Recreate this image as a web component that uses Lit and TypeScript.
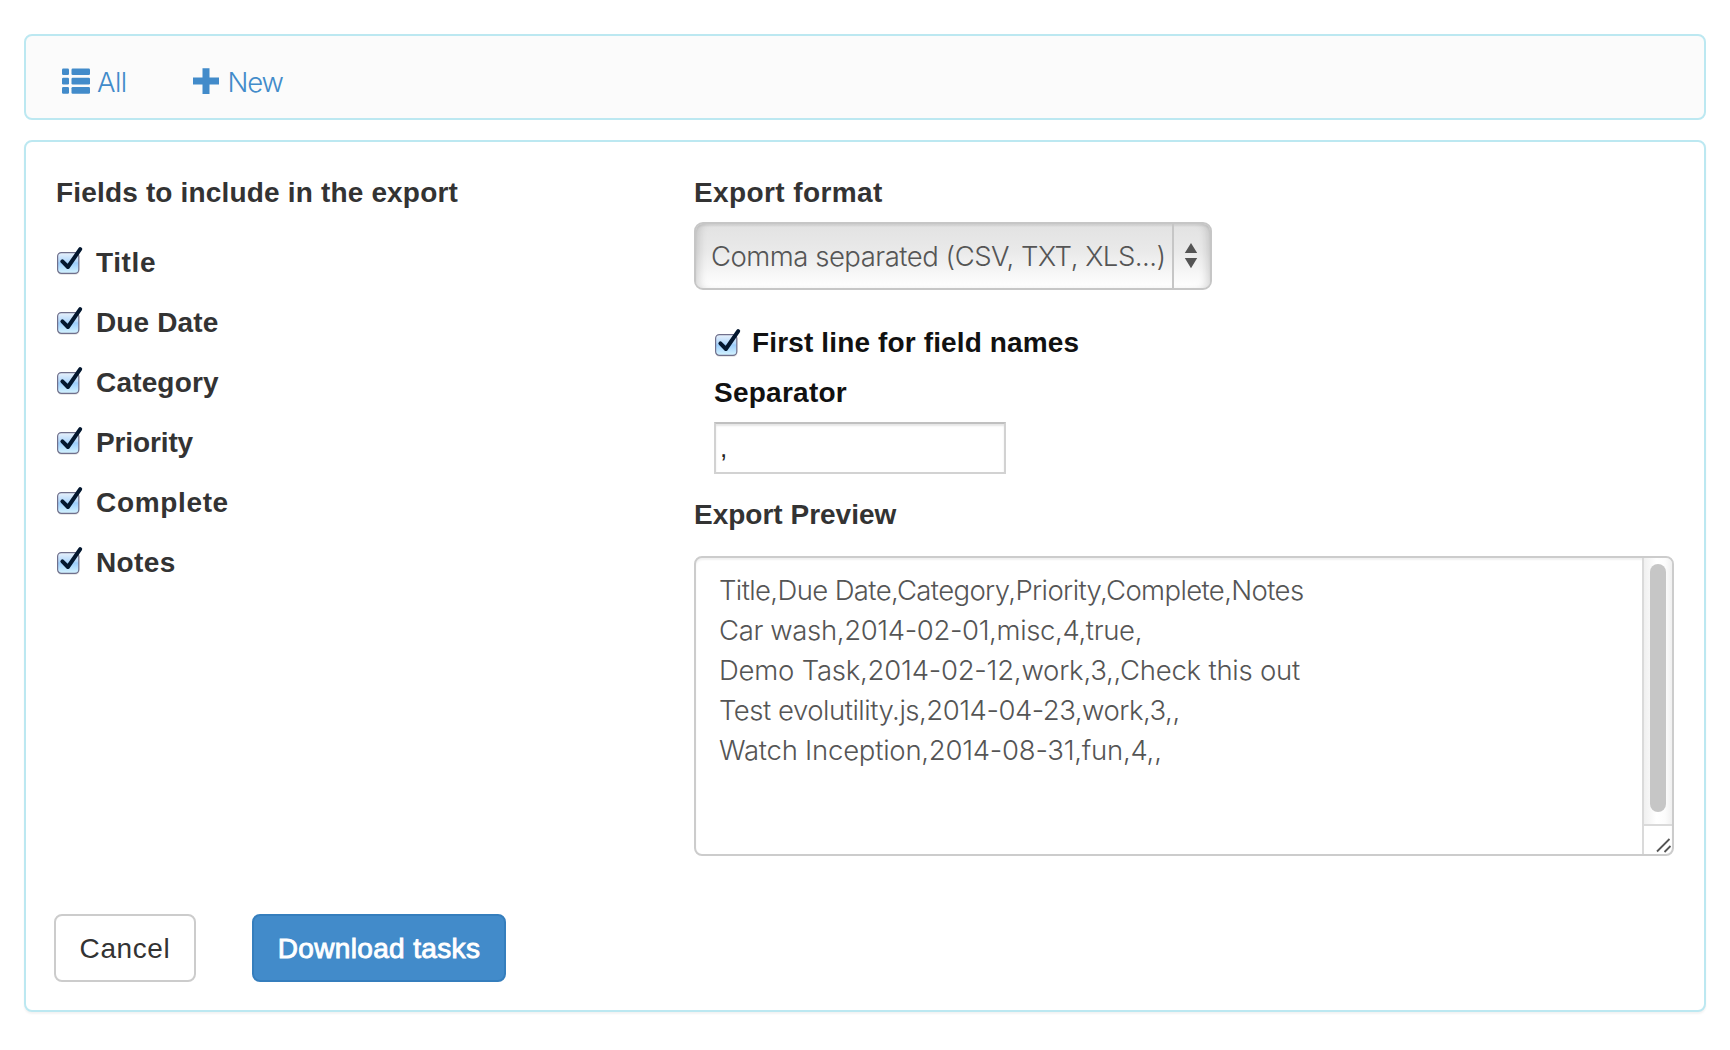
import { LitElement, html, css, svg } from "lit";
import { customElement, property } from "lit/decorators.js";

interface Run {
  text: string;
  tracking: number;
}

const FIELDS: Run[] = [
  { text: "Title", tracking: 0.6 },
  { text: "Due Date", tracking: 0.12 },
  { text: "Category", tracking: 0.17 },
  { text: "Priority", tracking: -0.12 },
  { text: "Complete", tracking: 0.66 },
  { text: "Notes", tracking: 0.4 },
];

const PREVIEW: Run[] = [
  { text: "Title,Due Date,Category,Priority,Complete,Notes", tracking: -0.62 },
  { text: "Car wash,2014-02-01,misc,4,true,", tracking: -0.36 },
  { text: "Demo Task,2014-02-12,work,3,,Check this out", tracking: -0.22 },
  { text: "Test evolutility.js,2014-04-23,work,3,,", tracking: -0.48 },
  { text: "Watch Inception,2014-08-31,fun,4,,", tracking: -0.24 },
];

const listIcon = svg`
  <svg class="icon" width="28" height="26" viewBox="0 0 28 26" fill="currentColor">
    <rect x="0" y="0.5" width="7" height="6.5" rx="1.2"/><rect x="9.5" y="0.5" width="18.5" height="6.5" rx="1.2"/>
    <rect x="0" y="9.8" width="7" height="6.6" rx="1.2"/><rect x="9.5" y="9.8" width="18.5" height="6.6" rx="1.2"/>
    <rect x="0" y="19" width="7" height="6.8" rx="1.2"/><rect x="9.5" y="19" width="18.5" height="6.8" rx="1.2"/>
  </svg>`;

const plusIcon = svg`
  <svg class="icon" width="26" height="26" viewBox="0 0 26 26" fill="currentColor">
    <path d="M9.5 0.3h7v9.2H26v7h-9.5V26h-7v-9.5H0v-7h9.5z"/>
  </svg>`;

@customElement("check-field")
class CheckField extends LitElement {
  @property() label = "";
  @property({ type: Number }) tracking = 0;

  static styles = css`
    :host { display: block; }
    label { display: flex; height: 40px; line-height: 42px; white-space: nowrap; }
    .box { flex: none; width: 27px; height: 32px; margin: var(--check-top, 3px) var(--check-gap, 12px) 0 0; }
  `;

  render() {
    return html`
      <label>
        <svg class="box" viewBox="0 0 27 32">
          <defs>
            <linearGradient id="fill" x1="0" y1="0" x2="0" y2="1">
              <stop offset="0" stop-color="#e9f2fc"/>
              <stop offset="0.42" stop-color="#b4d8fb"/>
              <stop offset="0.5" stop-color="#9ccdfb"/>
              <stop offset="1" stop-color="#d6f4ff"/>
            </linearGradient>
          </defs>
          <rect x="1.2" y="8" width="22.4" height="22" rx="4.5" fill="#000" opacity="0.09"/>
          <rect x="1.6" y="7.6" width="21.2" height="20.8" rx="3.8" fill="url(#fill)" stroke="#70708c" stroke-width="1.2"/>
          <path d="M6.4 16.4L11.9 22L24.2 4.2" fill="none" stroke="#04172f" stroke-width="4" stroke-linecap="round" stroke-linejoin="round"/>
        </svg>
        <span style="letter-spacing:${this.tracking}px">${this.label}</span>
      </label>`;
  }
}

@customElement("app-root")
class AppRoot extends LitElement {
  static styles = css`
    :host {
      display: block;
      box-sizing: border-box;
      height: 1050px;
      padding: 34px 24px 0;
      background: #fff;
      color: #333;
      font: 28px/40px "Liberation Sans", Arial, sans-serif;
    }
    * { box-sizing: border-box; }
    .panel {
      border: 2px solid #bce8f1;
      border-radius: 8px;
    }
    .nav {
      display: flex;
      gap: 66px;
      height: 86px;
      margin-bottom: 20px;
      padding: 26px 36px 0;
      background: #fbfbfb;
    }
    .link {
      display: flex;
      gap: 7px;
      color: #428bca;
      font: 300 27.5px/40px Inter, sans-serif;
      letter-spacing: -0.6px;
      white-space: nowrap;
    }
    .link.new { gap: 9px; letter-spacing: -1.2px; }
    .icon { display: block; flex: none; margin-top: 6px; }
    .body {
      display: flex;
      flex-direction: column;
      justify-content: space-between;
      height: 872px;
      padding: 30px 30px 28px 28px;
      background: #fff;
      box-shadow: 0 2px 2px rgba(0, 0, 0, 0.05);
    }
    .columns { display: grid; grid-template-columns: 640px 980px; }
    .heading { height: 40px; line-height: 42px; font-weight: bold; white-space: nowrap; }
    .fields > .heading { margin-left: 2px; letter-spacing: 0.17px; }
    .list {
      display: flex;
      flex-direction: column;
      gap: 20px;
      margin: 30px 0 0 2px;
      font-weight: bold;
      --check-gap: 13px;
    }
    .format { letter-spacing: 0.4px; }
    .select {
      display: flex;
      width: 518px;
      height: 68px;
      margin-top: 10px;
      border: 2px solid #c6c6c6;
      border-radius: 9px;
      background: linear-gradient(#e2e2e2, #e9e9e9 40%, #fff);
      box-shadow: inset 0 2px 2px rgba(0, 0, 0, 0.06), inset 8px 0 8px -5px rgba(0, 0, 0, 0.15), inset -8px 0 8px -5px rgba(0, 0, 0, 0.15);
      color: #555;
      font: 300 27.5px/64px Inter, sans-serif;
      letter-spacing: -0.49px;
      white-space: nowrap;
    }
    .value { width: 476px; padding-left: 15px; }
    .arrows {
      flex: 1;
      padding: 19px 0 0 10px;
      border-left: 2px solid #c6c6c6;
      line-height: 0;
    }
    .options { margin: 32px 0 0 20px; color: #111; font-weight: bold; --check-gap: 11px; --check-top: 5px; }
    .separator { height: 40px; margin-top: 10px; line-height: 42px; letter-spacing: 0.25px; }
    .input {
      width: 292px;
      height: 52px;
      margin-top: 10px;
      padding: 4px 0 0 4px;
      border: 2px solid #d2d2d2;
      border-top-color: #c0c0c0;
      box-shadow: inset 0 2px 2px rgba(0, 0, 0, 0.1);
      color: #222;
      font-weight: normal;
      font-size: 26px;
      line-height: 40px;
    }
    .preview-title { margin-top: 20px; }
    .textarea {
      display: flex;
      height: 300px;
      margin-top: 22px;
      border: 2px solid #ccc;
      border-radius: 8px;
      box-shadow: inset 0 2px 2px rgba(0, 0, 0, 0.06);
      overflow: hidden;
    }
    .lines {
      flex: 1;
      padding: 12px 0 0 23px;
      color: #555;
      font: 300 27.5px/40px Inter, sans-serif;
      white-space: pre;
    }
    .scroll {
      display: flex;
      flex-direction: column;
      width: 30px;
      border-left: 2px solid #dadada;
    }
    .track {
      height: 266px;
      padding: 6px 0 0 6px;
      background: linear-gradient(90deg, #f0f0f0, #fff 45%, #fcfcfc 75%, #f0f0f0);
    }
    .thumb { width: 16px; height: 248px; border-radius: 8px; background: #c6c6c6; }
    .corner { flex: 1; border-top: 2px solid #dadada; line-height: 0; }
    .actions { display: flex; gap: 56px; }
    .button {
      height: 68px;
      border: 2px solid #ccc;
      border-radius: 8px;
      font: inherit;
      line-height: 64px;
      text-align: center;
      white-space: nowrap;
      padding: 1px 0 0;
      background: #fff;
      color: #333;
    }
    .cancel { width: 142px; letter-spacing: 0.6px; }
    .download {
      width: 254px;
      border-color: #357ebd;
      background: #428bca;
      color: #fff;
      letter-spacing: 0.36px;
      -webkit-text-stroke: 0.9px #fff;
    }
  `;

  render() {
    return html`
      <nav class="panel nav">
        <a class="link">${listIcon}<span>All</span></a>
        <a class="link new">${plusIcon}<span>New</span></a>
      </nav>
      <main class="panel body">
        <div class="columns">
          <section class="fields">
            <div class="heading">Fields to include in the export</div>
            <div class="list">
              ${FIELDS.map((f) => html`<check-field .label=${f.text} .tracking=${f.tracking}></check-field>`)}
            </div>
          </section>
          <section>
            <div class="heading format">Export format</div>
            <div class="select">
              <span class="value">Comma separated (CSV, TXT, XLS...)</span>
              <span class="arrows">
                <svg width="14" height="26" viewBox="0 0 14 26" fill="#555">
                  <path d="M7 0L13.2 10H0.8zM0.8 15H13.2L7 25.2z"/>
                </svg>
              </span>
            </div>
            <div class="options">
              <check-field .label=${"First line for field names"} .tracking=${0.14}></check-field>
              <div class="separator">Separator</div>
              <div class="input">,</div>
            </div>
            <div class="heading preview-title">Export Preview</div>
            <div class="textarea">
              <div class="lines">${PREVIEW.map((l) => html`<div style="letter-spacing:${l.tracking}px">${l.text}</div>`)}</div>
              <div class="scroll">
                <div class="track"><div class="thumb"></div></div>
                <div class="corner">
                  <svg width="28" height="28" viewBox="0 0 28 28" fill="none" stroke="#555" stroke-width="1.8">
                    <path d="M13 25.5L25.5 13M20.5 26L26.5 20"/>
                  </svg>
                </div>
              </div>
            </div>
          </section>
        </div>
        <div class="actions">
          <button class="button cancel">Cancel</button>
          <button class="button download">Download tasks</button>
        </div>
      </main>`;
  }
}
